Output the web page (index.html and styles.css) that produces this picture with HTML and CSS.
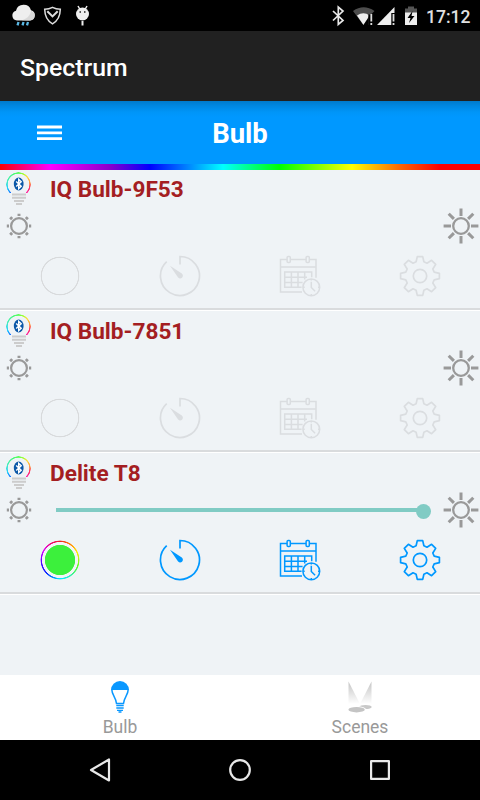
FILE: index.html
```
<!DOCTYPE html>
<html lang="en">
<head>
<meta charset="utf-8">
<title>Spectrum</title>
<link rel="stylesheet" href="styles.css">
</head>
<body>
<svg class="defs" width="0" height="0">
  <symbol id="bulb-core" viewBox="0 0 26 36">
    <ellipse cx="12.7" cy="13" rx="4.9" ry="6.5" fill="#0b58a8"/>
    <path d="M10.200 10.600l5 4.700-2.500 2.300V8.400l2.500 2.300-5 4.700" fill="none" stroke="#fff" stroke-width="1.400"/>
    <path d="M6 23.500h14M6 26.700h14M8 30.100h10M10 33.100h6" stroke="#ccc" stroke-width="2"/>
  </symbol>
  <symbol id="sun-small" viewBox="-13 -13 26 26">
    <circle r="7.9" fill="none" stroke="#999" stroke-width="2.200"/>
    <path d="M0-12.2v2.200M0 10v2.200M-12.2 0h2.200M10 0h2.200M-8.800-8.800l1.900 1.900M6.900 6.900l1.900 1.900M-8.800 8.800l1.900-1.900M6.900-6.900l1.900-1.900" stroke="#999" stroke-width="2.900"/>
  </symbol>
  <symbol id="sun-large" viewBox="-18 -18 36 36">
    <circle r="7.8" fill="none" stroke="#999" stroke-width="2.300"/>
    <path d="M0-17.4v7.4M0 10v7.4M-17.4 0h7.4M10 0h7.4M-12.3-12.3l5.2 5.2M7.1 7.1l5.2 5.2M-12.3 12.3l5.2-5.2M7.1-7.1l5.2-5.2" stroke="#999" stroke-width="3"/>
  </symbol>
  <symbol id="timer" viewBox="-21 -21 42 42">
    <path d="M0-11.4V-19.5A19.5 19.5 0 1 1-13.3-14.3" fill="none" stroke="currentColor" stroke-width="1.700"/>
    <path d="M-10-10.2L1.8-2.4A2.7 2.7 0 1 1-2.1 1.2Z" fill="currentColor"/>
  </symbol>
  <symbol id="calendar" viewBox="-21 -21 42 42">
    <g fill="none" stroke="currentColor" stroke-width="1.500">
      <path d="M-12.8-16.5h-6.7V16H2M-9.8-16.5H6.2M9.2-16.5H16V1.8M-19.5-9H16"/>
      <rect x="-12.9" y="-19.6" width="3.2" height="6" rx="1"/>
      <rect x="6.1" y="-19.6" width="3.2" height="6" rx="1"/>
      <path d="M1.600 11.300h-16.900V-4H11.700V1.300M-8.600-4v15.300M-2-4v15.300M4.700-4V3.400M-15.300 1.200H7M-15.300 6.400H2.600"/>
      <circle cx="11.3" cy="11.3" r="8.4"/>
      <path d="M11.3 5.800v5.700l3.800 3.800M11.3 3v1.500M11.3 18v1.500M3.2 11.300h1.500M18 11.300h1.500"/>
    </g>
  </symbol>
  <symbol id="gear" viewBox="-21 -21 42 42">
    <path d="M-2.7-19.4H2.7L3.9-14.2 7-12.8 11.6-15.7 15.7-11.6 12.8-7 14.2-3.9 19.4-2.7V2.7L14.2 3.9 12.8 7 15.7 11.6 11.6 15.7 7 12.8 3.9 14.2 2.7 19.4H-2.7L-3.9 14.2-7 12.8-11.6 15.7-15.7 11.6-12.8 7-14.2 3.9-19.4 2.7V-2.7L-14.2-3.9-12.8-7-15.7-11.6-11.6-15.7-7-12.8-3.9-14.2Z" fill="none" stroke="currentColor" stroke-width="1.700" stroke-linejoin="round"/>
    <circle r="6.7" fill="none" stroke="currentColor" stroke-width="1.700"/>
  </symbol>
</svg>

<div class="status">
  <svg width="100" height="31" viewBox="0 0 100 31">
    <path d="M17 20.5a5 5 0 0 1-1-9.8 7.8 7.8 0 0 1 15-.4 5.2 5.2 0 0 1-1 10.2z" fill="#eee"/>
    <path d="M22 20.2c4-1 8-4 9-9.500a5 5 0 0 1-1 9.800z" fill="#d8d8d8"/>
    <path d="M18.500 22l-1 3.400M23.500 22l-1 3.400M28 22l-1 3.400" stroke="#5ab9e6" stroke-width="2.300"/>
    <path d="M52.500 7.300c-2.400 1.300-5 1.900-7.800 2 .1 6.700 2.400 11.600 7.800 14.500 5.400-2.900 7.700-7.800 7.800-14.500-2.800-.1-5.400-.7-7.800-2z" fill="none" stroke="#ddd" stroke-width="1.500"/>
    <path d="M47.300 11.200l5.200 5.200 5.200-5.200" fill="none" stroke="#ddd" stroke-width="2"/>
    <circle cx="82.500" cy="14" r="6.500" fill="#eee"/>
    <path d="M78 6l2 3.500M87 6l-2 3.500" stroke="#eee" stroke-width="1.500"/>
    <path d="M82.500 21v4.500" stroke="#eee" stroke-width="2"/>
    <path d="M79.500 12h1.500M84 12h1.500" stroke="#222" stroke-width="1.500"/>
  </svg>
  <svg class="signals" width="94" height="31" viewBox="330 0 94 31">
    <path d="M333 11l10 9.500-4.700 4V7l4.700 4-10 9.500" fill="none" stroke="#e8e8e8" stroke-width="1.700"/>
    <path d="M353 11Q363.500 3.500 374.500 11L371 14.500V25h-7.500z" fill="#4d4d4d"/>
    <path d="M357 15.500Q363.500 11 369.500 15.500L363.500 25z" fill="#eee"/>
    <path d="M363.500 25L368.300 18v7.500h-5z" fill="#000"/>
    <path d="M368.300 14.500h6v11h-6z" fill="#000"/>
    <path d="M371.300 14v7.500M371.300 23v2" stroke="#ddd" stroke-width="1.800"/>
    <path d="M377 25L394.500 7v18z" fill="#eee"/>
    <path d="M391.300 13h5v12.500h-5z" fill="#000"/>
    <path d="M393.500 14v7.500M393.500 23v2" stroke="#ddd" stroke-width="1.800"/>
    <path d="M405 8.500h3V6.500h6v2h3V13h-12z" fill="#555"/>
    <path d="M405 12.500h12V25h-12z" fill="#eee"/>
    <path d="M412.500 11l-5 7h3l-1.500 5 5.500-7h-3z" fill="#000"/>
  </svg>
  <span class="clock">17:12</span>
</div>
<div class="appbar">Spectrum</div>
<header class="header">
  <svg class="menu" width="25" height="16" viewBox="0 0 25 16"><path d="M0 2h25M0 7.800h25M0 13.600h25" stroke="#fff" stroke-width="2.800"/></svg>
  <h1>Bulb</h1>
</header>
<div class="rainbow"></div>

<main class="list">
  <section class="device off">
    <div class="head"><div class="bulb"><svg width="26" height="36"><use href="#bulb-core"/></svg></div><h2>IQ Bulb-9F53</h2></div>
    <div class="dimmer"><svg width="26" height="26"><use href="#sun-small"/></svg><svg width="36" height="36"><use href="#sun-large"/></svg></div>
    <div class="tools"><div class="ring"></div><svg><use href="#timer"/></svg><svg><use href="#calendar"/></svg><svg><use href="#gear"/></svg></div>
  </section>
  <section class="device off">
    <div class="head"><div class="bulb"><svg width="26" height="36"><use href="#bulb-core"/></svg></div><h2>IQ Bulb-7851</h2></div>
    <div class="dimmer"><svg width="26" height="26"><use href="#sun-small"/></svg><svg width="36" height="36"><use href="#sun-large"/></svg></div>
    <div class="tools"><div class="ring"></div><svg><use href="#timer"/></svg><svg><use href="#calendar"/></svg><svg><use href="#gear"/></svg></div>
  </section>
  <section class="device">
    <div class="head"><div class="bulb"><svg width="26" height="36"><use href="#bulb-core"/></svg></div><h2>Delite T8</h2></div>
    <div class="dimmer"><svg width="26" height="26"><use href="#sun-small"/></svg><div class="slider"><div class="thumb"></div></div><svg width="36" height="36"><use href="#sun-large"/></svg></div>
    <div class="tools"><div class="ring color"></div><svg><use href="#timer"/></svg><svg><use href="#calendar"/></svg><svg><use href="#gear"/></svg></div>
  </section>
</main>

<nav class="tabs">
  <div class="tab">
    <svg width="20" height="33" viewBox="0 0 20 33">
      <path d="M1.800 9.500C1.800 15 6 17.500 6.500 23.500h7C14 17.500 18.200 15 18.200 9.500" fill="#fff" stroke="#0a98ff" stroke-width="1.500"/>
      <path d="M1 10a9 9 0 0 1 18 0z" fill="#0a98ff"/>
      <path d="M6.300 25.500h7.400M6.300 28h7.400M7 30.300h6M8.500 32h3" stroke="#0a98ff" stroke-width="1.300"/>
    </svg>
    <span>Bulb</span>
  </div>
  <div class="tab">
    <svg width="26" height="33" viewBox="0 0 26 33">
      <defs><linearGradient id="beam" x2="0" y2="1"><stop stop-color="#c4c4c4"/><stop offset="1" stop-color="#fff"/></linearGradient></defs>
      <path d="M1.500 1.500L13 24H1.500z" fill="url(#beam)"/>
      <path d="M24.500 1.500L13 24h11.500z" fill="url(#beam)"/>
      <ellipse cx="18.500" cy="27" rx="6.200" ry="2" fill="#c8c8c8"/>
      <ellipse cx="10" cy="29.500" rx="9" ry="3.200" fill="#fff"/>
      <ellipse cx="9.600" cy="29.700" rx="8.200" ry="2.700" fill="#c4c4c4"/>
    </svg>
    <span>Scenes</span>
  </div>
</nav>
<div class="sysnav">
  <svg width="24" height="26" viewBox="0 0 24 26"><path d="M3 13L21 2.500v21z" fill="none" stroke="#e8e8e8" stroke-width="2.200" stroke-linejoin="round"/></svg>
  <svg width="24" height="24" viewBox="0 0 24 24"><circle cx="12" cy="12" r="9.800" fill="none" stroke="#e8e8e8" stroke-width="2.200"/></svg>
  <svg width="24" height="24" viewBox="0 0 24 24"><rect x="3.100" y="3.100" width="17.800" height="17.800" fill="none" stroke="#e8e8e8" stroke-width="2.200" stroke-linejoin="round"/></svg>
</div>
</body>
</html>
```
FILE: styles.css
```
* { box-sizing: border-box; }

body {
  margin: 0;
  width: 480px;
  height: 800px;
  display: flex;
  flex-direction: column;
  overflow: hidden;
  background: #eff3f6;
  font-family: Roboto, sans-serif;
}

svg { display: block; flex: none; }
.defs { position: absolute; }
h1, h2 { margin: 0; }

.status {
  height: 31px;
  display: flex;
  background: #000;
  color: #e0e0e0;
}
.signals { margin-left: 230px; }
.clock { margin-left: 2px; font-size: 17.500px; font-weight: 500; line-height: 34px; }

.appbar {
  height: 70px;
  padding-left: 20px;
  background: #212121;
  color: #fff;
  font-size: 24.800px;
  font-weight: 500;
  line-height: 74px;
}

.header {
  height: 63px;
  display: grid;
  grid-template-columns: 1fr auto 1fr;
  align-items: center;
  background: linear-gradient(#007acc, #0088e3 5px, #0095f8 11px, #0098ff 16px);
  color: #fff;
}
.menu { margin-left: 37px; }
.header h1 { font-size: 27.500px; line-height: 63px; padding-top: 1px; font-weight: 700; }

.rainbow {
  height: 6px;
  background: linear-gradient(90deg, #f00, #f0f 50px, #80c 110px, #00f 150px, #0ff 223px, #0f0 280px, #ff0 352px, #f60 400px, #f00 440px);
}

.list { flex: 1; }

.device {
  height: 142px;
  padding-bottom: 2px;
  color: #0098ff;
  background: linear-gradient(#d9dbdd, #d9dbdd) 0 138px / 100% 2px no-repeat,
              linear-gradient(#fff, #fff) 0 140px / 100% 1px no-repeat;
}
.device.off { color: #dadde0; }

.head { display: flex; height: 38px; padding-left: 6px; }
.bulb { position: relative; width: 26px; height: 36px; margin-top: 1px; }
.bulb::before {
  content: "";
  position: absolute;
  left: 0;
  top: 1px;
  width: 25px;
  height: 25px;
  border-radius: 50%;
  background: conic-gradient(#5f5, #af3 25deg, #fd4 48deg, #f94 80deg, #f36 105deg, #f2a 138deg, transparent 138deg 222deg, #16f 222deg, #2cf 250deg, #4eb 290deg, #5f5);
  -webkit-mask: radial-gradient(circle, transparent 10.500px, #000 11.100px 12px, transparent 12.500px);
  mask: radial-gradient(circle, transparent 10.500px, #000 11.100px 12px, transparent 12.500px);
}
.bulb svg { position: relative; }
.head h2 {
  margin-left: 18px;
  color: #a41e22;
  font-size: 22.600px;
  line-height: 40px;
  font-weight: 700;
}

.dimmer {
  display: flex;
  align-items: center;
  justify-content: space-between;
  height: 36px;
  padding: 0 1px 0 6px;
}
.slider {
  position: relative;
  width: 368px;
  height: 4px;
  margin-left: 5px;
  background: #80cbc4;
}
.thumb {
  position: absolute;
  right: -7px;
  top: -4px;
  width: 15px;
  height: 15px;
  border-radius: 50%;
  background: #80cbc4;
}

.tools {
  display: grid;
  grid-template-columns: repeat(4, 120px);
  justify-items: center;
  align-items: center;
  height: 64px;
}
.tools svg { width: 42px; height: 42px; }
.ring {
  width: 40px;
  height: 40px;
  border-radius: 50%;
  background: radial-gradient(circle, transparent 17.800px, #d8dadc 18.400px 19px, transparent 19.600px);
}
.ring.color {
  background: radial-gradient(circle, #3cf03c 14.800px, #f4f4f8 15.500px 17.700px, transparent 18.300px),
              conic-gradient(#e22, #f80 35deg, #fe0 65deg, #5f2 110deg, #2ec 155deg, #0ef 180deg, #02f 225deg, #50f 265deg, #d0f 300deg, #e07 330deg, #e22);
  -webkit-mask: radial-gradient(circle, #000 19px, transparent 19.800px);
  mask: radial-gradient(circle, #000 19px, transparent 19.800px);
}

.tabs {
  display: grid;
  grid-template-columns: 1fr 1fr;
  height: 65px;
  background: #fff;
}
.tab { display: flex; flex-direction: column; align-items: center; padding-top: 5px; }
.tab span { color: #999; font-size: 17.500px; line-height: 28px; }

.sysnav {
  display: flex;
  align-items: center;
  justify-content: space-between;
  height: 60px;
  padding: 0 88px;
  background: #000;
}
```
